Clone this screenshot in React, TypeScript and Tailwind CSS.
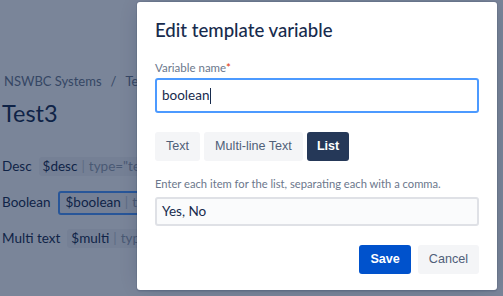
import React from "react";

const ui = "font-['Lato',sans-serif]";
const btnFont = "font-['Liberation_Sans',Arial,sans-serif]";

function TagRow({ label, name, focused }: { label: string; name: string; focused?: boolean }) {
  return (
    <div className="flex items-center gap-[7px] h-[24px]">
      <span className="text-[13.5px] text-[#172B4D]">{label}</span>
      <span
        className={
          "flex items-center whitespace-nowrap rounded-[3px] bg-[#F4F5F7] text-[13.5px] " +
          (focused ? "border-2 border-[#4C9AFF] h-[24px] px-[6px]" : "h-[19px] px-[4px]")
        }
      >
        <span className="text-[#172B4D]">{name}</span>
        <span className="mx-[4px] text-[#C1C7D0]">|</span>
        <span className="text-[#97A0AF]">type="text"</span>
      </span>
    </div>
  );
}

function ToggleButton({ children, selected }: { children: React.ReactNode; selected?: boolean }) {
  return (
    <div
      className={
        btnFont +
        " flex h-[29px] items-center rounded-[3px] text-[12.6px] " +
        (selected ? "bg-[#253858] px-[10px] text-white font-bold" : "bg-[#F4F5F7] px-[11px] text-[#505F79]")
      }
    >
      {children}
    </div>
  );
}

export default function App() {
  return (
    <div className={ui + " relative h-[296px] w-[503px] overflow-hidden bg-white"}>
      {/* page behind the dialog */}
      <div className="flex flex-col pl-[2px] pt-[72px]">
        <div className="flex gap-[9px] pl-[2px] text-[13px] text-[#6B778C] whitespace-nowrap">
          <span>NSWBC Systems</span>
          <span>/</span>
          <span>Templates</span>
        </div>
        <h1 className="mt-[4px] text-[23.5px] leading-[34px] text-[#172B4D]">Test3</h1>
        <div className="mt-[25px] flex flex-col gap-[12px]">
          <TagRow label="Desc" name="$desc" />
          <TagRow label="Boolean" name="$boolean" focused />
          <TagRow label="Multi text" name="$multi" />
        </div>
      </div>

      {/* blanket */}
      <div className="absolute inset-0 bg-[rgba(9,30,66,0.54)]" />

      {/* dialog */}
      <div className="absolute left-[137px] top-[2px] flex h-[288px] w-[360px] flex-col rounded-[3px] bg-white px-[18px] pt-[16px] shadow-[0_0_0_1px_rgba(9,30,66,0.08),0_2px_1px_rgba(9,30,66,0.08),0_0_20px_-6px_rgba(9,30,66,0.31)]">
        <h2 className="text-[18.6px] font-medium leading-[24px] text-[#172B4D]">Edit template variable</h2>

        <label className="mt-[18px] text-[11.5px] leading-[16px] text-[#6B778C]">
          Variable name<span className="text-[#DE350B]">*</span>
        </label>
        <div className="mt-[2px] flex h-[35px] items-center rounded-[3px] border-2 border-[#4C9AFF] bg-white px-[5px] text-[13.5px] text-[#172B4D]">
          boolean
          <span className="ml-px h-[16px] w-px bg-[#172B4D]" />
        </div>

        <div className="mt-[19px] flex gap-[4px]">
          <ToggleButton>Text</ToggleButton>
          <ToggleButton>Multi-line Text</ToggleButton>
          <ToggleButton selected>List</ToggleButton>
        </div>

        <p className="mt-[15px] text-[11.2px] leading-[16px] text-[#6B778C]">
          Enter each item for the list, separating each with a comma.
        </p>
        <div className="mt-[5px] flex h-[29px] items-center rounded-[3px] border-2 border-[#DFE1E6] bg-[#FAFBFC] px-[5px] text-[13.5px] text-[#172B4D]">
          Yes, No
        </div>

        <div className="mt-[19px] flex justify-end gap-[7px]">
          <div className={btnFont + " flex h-[29px] items-center rounded-[3px] bg-[#0052CC] px-[11px] text-[12.6px] font-bold text-white"}>
            Save
          </div>
          <div className={btnFont + " flex h-[29px] items-center rounded-[3px] bg-[#F4F5F7] px-[11px] text-[12.6px] text-[#505F79]"}>
            Cancel
          </div>
        </div>
      </div>
    </div>
  );
}
